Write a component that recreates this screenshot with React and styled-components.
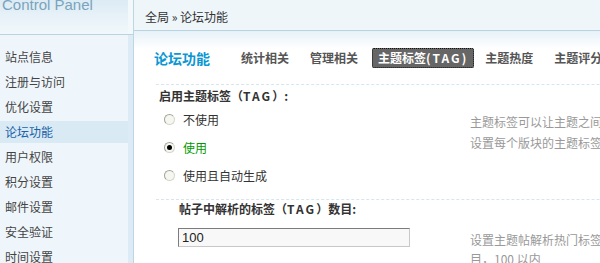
import React from 'react';
import styled, { createGlobalStyle } from 'styled-components';

const GlobalStyle = createGlobalStyle`
	html,
	body {
		margin: 0;
		padding: 0;
		overflow: hidden;
		background: #fff;
	}
	body {
		font: 12px 'Noto Sans CJK SC', 'Liberation Sans', sans-serif;
		color: #333;
	}
`;

const menu = ['站点信息', '注册与访问', '优化设置', '论坛功能', '用户权限', '积分设置', '邮件设置', '安全验证', '时间设置'];
const tabs = [
	{ label: '统计相关' },
	{ label: '管理相关' },
	{ label: '主题标签', tag: '(TAG)', active: true },
	{ label: '主题热度' },
	{ label: '主题评分' },
];

const Frame = styled.div`
	display: flex;
	width: 1000px;
	height: 263px;
`;

const Side = styled.div`
	width: 133px;
	flex-shrink: 0;
	display: flex;
	flex-direction: column;
	border-right: 1px solid #bcd6e3;
`;

const Logo = styled.div`
	height: 34px;
	flex-shrink: 0;
	overflow: hidden;
	border-bottom: 1px solid #b9d3df;
	background: linear-gradient(#dcebf5, #f2f8fb);
	box-shadow: inset -5px 0 0 #f3f8fb;
	span {
		display: block;
		margin: -3px 0 0 2px;
		font: 15px/15px 'Liberation Sans', sans-serif;
		color: #7aa4bb;
	}
`;

const Menu = styled.ul`
	flex: 1;
	margin: 0;
	padding: 11px 0 0;
	list-style: none;
	background: #eff6fb;
	box-shadow: inset -5px 0 0 #dcebf5;
`;

const MenuItem = styled.li`
	width: 123px;
	height: 22px;
	margin-bottom: 3px;
	padding-left: 5px;
	line-height: 22px;
	color: ${(p) => (p.active ? '#1a62a8' : '#444')};
	background: ${(p) => (p.active ? '#d9eaf5' : 'transparent')};
`;

const Main = styled.div`
	flex: 1;
	display: flex;
	flex-direction: column;
`;

const TopBar = styled.div`
	height: 3px;
	background: #0f9ad5;
`;

const Crumb = styled.div`
	height: 30px;
	padding-left: 11px;
	line-height: 34px;
	background: #eef6fa;
	border-bottom: 1px solid #b9d3df;
	color: #333;
`;

const Content = styled.div`
	flex: 1;
	padding-left: 20px;
	background: linear-gradient(#e6f1f8, #fff 18px);
`;

const TitleRow = styled.div`
	display: flex;
	align-items: center;
	gap: 7px;
	height: 20px;
	margin-top: 17px;
	h3 {
		margin: 0 17px 0 0;
		font-size: 14px;
		line-height: 20px;
		color: #0c97d4;
	}
`;

const Tab = styled.span`
	height: 20px;
	padding: 0 ${(p) => (p.active ? 6 : 7)}px;
	margin-right: ${(p) => (p.active ? -3 : 0)}px;
	line-height: 20px;
	border-radius: 2px;
	font-weight: bold;
	white-space: nowrap;
	color: ${(p) => (p.active ? '#fff' : '#555')};
	background: ${(p) => (p.active ? '#666' : 'transparent')};
	outline: ${(p) => (p.active ? '1px dotted #111' : 'none')};
	outline-offset: -1px;
`;

const Tag = styled.span`
	letter-spacing: ${(p) => p.spacing}px;
`;

const Sections = styled.div`
	margin: 16px 0 0 2px;
`;

const Section = styled.div`
	border-top: 1px dashed #d4e6f0;
	padding-bottom: ${(p) => p.pb || 0}px;
`;

const Heading = styled.div`
	padding: ${(p) => p.pt || 0}px 0 0 ${(p) => p.indent}px;
	line-height: 18px;
	font-weight: bold;
	color: #333;
`;

const Row = styled.div`
	display: flex;
	margin-top: ${(p) => p.mt || 0}px;
`;

const Left = styled.div`
	width: ${(p) => 314 - p.indent}px;
	padding-left: ${(p) => p.indent}px;
`;

const Desc = styled.div`
	padding-top: ${(p) => p.pt}px;
	line-height: ${(p) => p.lh}px;
	color: #999;
	white-space: nowrap;
	span {
		display: block;
	}
`;

const Radio = styled.label`
	display: flex;
	align-items: center;
	height: 28px;
	color: ${(p) => (p.checked ? '#090' : '#333')};
	i {
		position: relative;
		width: 9px;
		height: 9px;
		margin-right: 8px;
		border: 1px solid #a3a39b;
		border-right-color: #d6d6cc;
		border-bottom-color: #d6d6cc;
		border-radius: 50%;
		background: #f7f7f1;
	}
	i::after {
		content: '';
		display: ${(p) => (p.checked ? 'block' : 'none')};
		position: absolute;
		left: 2px;
		top: 2px;
		width: 5px;
		height: 5px;
		border-radius: 50%;
		background: #000;
	}
`;

const Input = styled.input`
	box-sizing: border-box;
	width: 232px;
	height: 19px;
	margin: 0;
	padding: 0 3px;
	border: 1px solid;
	border-color: #7c7c7c #c8c8c8 #c8c8c8 #7c7c7c;
	background: #f8f8f8;
	font: 13px 'Liberation Sans', sans-serif;
	color: #222;
`;

const App = () => {
	return (
		<Frame>
			<GlobalStyle />
			<Side>
				<Logo>
					<span>Control Panel</span>
				</Logo>
				<Menu>
					{menu.map((m) => (
						<MenuItem key={m} active={m === '论坛功能'}>
							{m}
						</MenuItem>
					))}
				</Menu>
			</Side>
			<Main>
				<TopBar />
				<Crumb>全局 &raquo; 论坛功能</Crumb>
				<Content>
					<TitleRow>
						<h3>论坛功能</h3>
						{tabs.map((t) => (
							<Tab key={t.label} active={t.active}>
								{t.label}
								{t.tag && <Tag spacing={2}>{t.tag}</Tag>}
							</Tab>
						))}
					</TitleRow>
					<Sections>
						<Section pb={10}>
							<Heading indent={3} pt={2}>
								启用主题标签（<Tag spacing={2}>TAG</Tag>）:
							</Heading>
							<Row>
								<Left indent={8}>
									<Radio>
										<i />
										不使用
									</Radio>
									<Radio checked>
										<i />
										使用
									</Radio>
									<Radio>
										<i />
										使用且自动生成
									</Radio>
								</Left>
								<Desc pt={6} lh={21}>
									<span>主题标签可以让主题之间通过标签相互关联，方便浏览</span>
									<span>设置每个版块的主题标签是否开启请到版块管理中设置</span>
								</Desc>
							</Row>
						</Section>
						<Section>
							<Heading indent={23}>
								帖子中解析的标签（<Tag spacing={2}>TAG</Tag>）数目:
							</Heading>
							<Row mt={10}>
								<Left indent={22}>
									<Input defaultValue="100" />
								</Left>
								<Desc pt={2} lh={19}>
									<span>设置主题帖解析热门标签的最大数</span>
									<span>目，100 以内</span>
								</Desc>
							</Row>
						</Section>
					</Sections>
				</Content>
			</Main>
		</Frame>
	);
};

export default App;
